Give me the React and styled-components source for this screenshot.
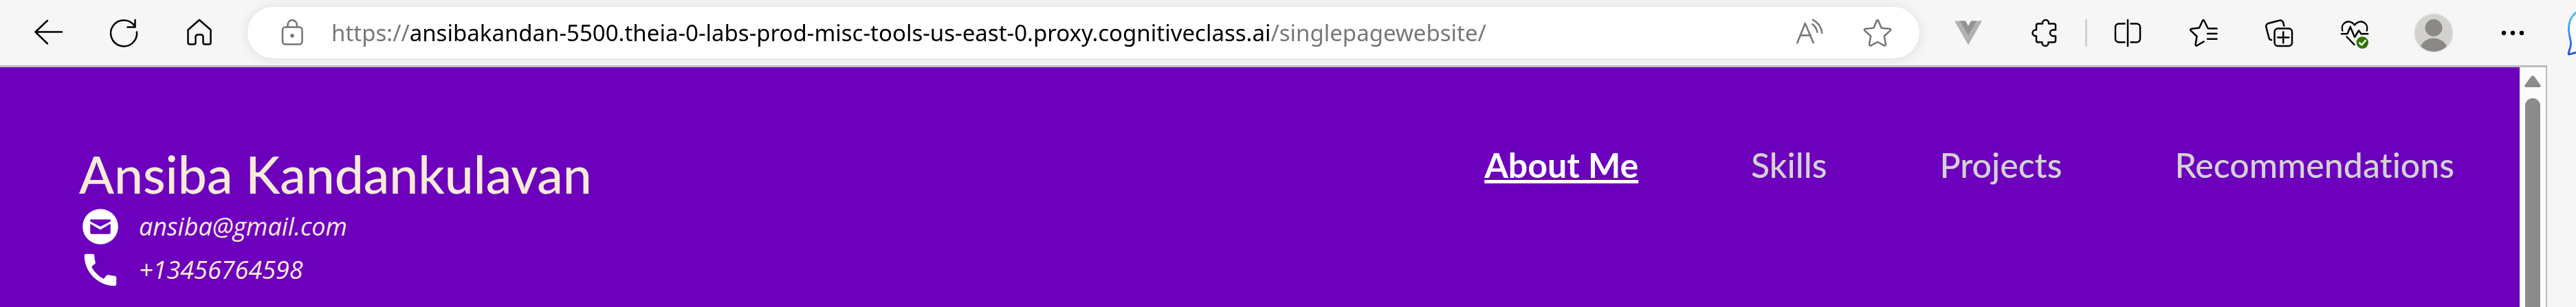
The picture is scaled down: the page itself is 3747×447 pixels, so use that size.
import React, { useLayoutEffect, useState } from 'react';
import styled, { createGlobalStyle } from 'styled-components';

const URL_PARTS = [
  'https://',
  'ansibakandan-5500.theia-0-labs-prod-misc-tools-us-east-0.proxy.cognitiveclass.ai',
  '/singlepagewebsite/',
];
const URL_FONT = '33px "Noto Sans", sans-serif';

const GlobalStyle = createGlobalStyle`
  *, *::before, *::after { box-sizing: border-box; }
  body { margin: 0; background: #f6f6f6; }
`;

const Browser = styled.div`
  display: flex;
  flex-direction: column;
  min-height: 100vh;
  overflow: hidden;
  background: #f6f6f6;
`;

const Toolbar = styled.div`
  display: flex;
  align-items: center;
  height: 95px;
  padding-left: 15px;
`;

const ToolButton = styled.button`
  display: flex;
  flex: none;
  align-items: center;
  justify-content: ${(p) => (p.$end ? 'flex-end' : 'center')};
  width: ${(p) => p.$width || 110}px;
  height: 75px;
  padding: 0;
  border: 0;
  background: none;
  color: ${(p) => (p.$muted ? '#747474' : '#000')};
`;

const Glyph = styled.svg`
  flex: none;
  width: 44px;
  height: 44px;
  overflow: visible;
  fill: none;
  stroke: currentColor;
  stroke-width: 2.5;
  stroke-linecap: round;
  stroke-linejoin: round;
`;

const Picture = styled.svg`
  display: block;
  flex: none;
`;

const AddressBar = styled.form`
  display: flex;
  flex: 1;
  align-items: center;
  min-width: 0;
  height: 75px;
  margin: 0 16px 0 15px;
  padding: 0 12px 0 8px;
  border-radius: 38px;
  background: #fff;
  box-shadow: 0 1px 18px rgba(0, 0, 0, 0.11);
`;

const AddressInput = styled.input`
  flex: 1;
  min-width: 0;
  height: 60px;
  padding: 0;
  border: 0;
  outline: 0;
  font: ${URL_FONT};
  color: #000;
  background-color: #767676;
  background-clip: text;
  -webkit-background-clip: text;
  -webkit-text-fill-color: transparent;
`;

const Divider = styled.div`
  flex: none;
  width: 3px;
  height: 40px;
  margin: 0 4px 0 5px;
  background: #d0d0d0;
`;

const Viewport = styled.div`
  display: flex;
  flex: 1;
  margin-right: 42px;
  border-top: 3px solid #bdbdbd;
  border-right: 2px solid #bdbdbd;
`;

const Header = styled.header`
  display: flex;
  flex: 1;
  align-items: flex-start;
  justify-content: space-between;
  padding: 110px 95px 20px 115px;
  background: #6c00bd;
  font-family: Lato, sans-serif;
  font-weight: 500;
  font-variant-ligatures: none;
`;

const Name = styled.h1`
  margin: 0;
  font-size: 75px;
  font-weight: inherit;
  line-height: 90px;
  color: #faebd7;
`;

const Contact = styled.address`
  display: flex;
  align-items: center;
  gap: 25px;
  height: 63px;
  font: italic 500 36px "Open Sans", sans-serif;
  color: #faebd7;
`;

const ContactLink = styled.a`
  color: inherit;
  text-decoration: none;
`;

const Nav = styled.nav`
  display: flex;
  gap: 164px;
`;

const NavLink = styled.a`
  font-size: 50px;
  line-height: 64px;
  white-space: nowrap;
  font-weight: ${(p) => (p.$active ? 700 : 'inherit')};
  color: ${(p) => (p.$active ? '#fff' : '#d3d3d3')};
  text-decoration: ${(p) => (p.$active ? 'underline 5px' : 'none')};
  text-underline-offset: 3px;
  text-decoration-skip-ink: none;
`;

const Scrollbar = styled.div`
  display: flex;
  flex: none;
  flex-direction: column;
  align-items: center;
  gap: 16px;
  width: 38px;
  padding-top: 12px;
  background: #fcfcfc;
`;

const Thumb = styled.div`
  flex: 1;
  width: 22px;
  border-radius: 11px 11px 0 0;
  background: #8b8b8b;
`;

const Icon = ({ children }) => (
  <Glyph viewBox="0 0 44 44" aria-hidden="true">{children}</Glyph>
);

// Greys the scheme and the path of the address, leaving the host black.
function useAddressColours() {
  const [gradient, setGradient] = useState('none');
  useLayoutEffect(() => {
    const ctx = document.createElement('canvas').getContext('2d');
    const measure = () => {
      ctx.font = URL_FONT;
      const from = ctx.measureText(URL_PARTS[0]).width;
      const to = ctx.measureText(URL_PARTS[0] + URL_PARTS[1]).width;
      setGradient(
        `linear-gradient(to right, #767676 ${from}px, #000 ${from}px ${to}px, #767676 ${to}px)`
      );
    };
    measure();
    document.fonts.ready.then(measure);
  }, []);
  return gradient;
}

function Address() {
  const gradient = useAddressColours();
  return (
    <AddressBar onSubmit={(e) => e.preventDefault()}>
      <ToolButton type="button" $width={114} $muted aria-label="View site information">
        <Icon>
          <rect x="8" y="13.5" width="28.5" height="25" rx="4" />
          <path d="M15.5 13V10a6.7 6.7 0 0 1 13.4 0v3" />
          <circle cx="22" cy="26" r="1.5" fill="currentColor" />
        </Icon>
      </ToolButton>
      <AddressInput
        type="text"
        aria-label="Address and search bar"
        spellCheck={false}
        defaultValue={URL_PARTS.join('')}
        style={{ backgroundImage: gradient }}
      />
      <ToolButton type="button" $width={99} $muted aria-label="Read aloud">
        <Icon>
          <path d="M4.3 36.5 15.7 8 27.7 36.5M8.5 25.5h15.5M26.3 9.2a18 18 0 0 1 7 11.6M27 2.8a25 25 0 0 1 13.3 19.4" />
        </Icon>
      </ToolButton>
      <ToolButton type="button" $width={99} $muted aria-label="Add to favorites">
        <Icon>
          <path d="M20.8 4.2q1.2-1.8 2.4 0L27.7 14.8l12 1.2q2.4.8.8 2.6L31.8 26.5l2.2 12q-.2 2.6-2.4 1.8L22 35l-9.6 5.3q-2.2.8-2.4-1.8l2.2-12L3.5 18.6q-1.6-1.8.8-2.6l12-1.2z" />
        </Icon>
      </ToolButton>
    </AddressBar>
  );
}

export default function App() {
  return (
    <Browser>
      <GlobalStyle />
      <Toolbar>
        <ToolButton aria-label="Back">
          <Icon><path d="M42 20.5H3.500M21 4 3.500 20.500 21 37.500" /></Icon>
        </ToolButton>
        <ToolButton aria-label="Refresh">
          <Icon><path d="M41 20.500A19 19 0 1 1 38 12M38.500 3v10.500H27.500" /></Icon>
        </ToolButton>
        <ToolButton aria-label="Home">
          <Icon>
            <path d="M22 3 38.500 17.500V36a2.500 2.500 0 0 1-2.500 2.500h-6a2.500 2.500 0 0 1-2.500-2.500v-8.500a3 3 0 0 0-3-3h-5a3 3 0 0 0-3 3V36a2.500 2.500 0 0 1-2.500 2.500H8A2.500 2.500 0 0 1 5.500 36V17.500z" />
          </Icon>
        </ToolButton>
        <Address />
        <ToolButton aria-label="Vue devtools">
          <Picture width="44" height="44" viewBox="0 0 44 44" aria-hidden="true">
            <path d="M2 4.500h16l4 7.500 4-7.500h16L22 39.500z" fill="#b1b1b1" />
            <path d="M10 4.500h8l4 7.500 4-7.500h8L22 25z" fill="#929292" />
          </Picture>
        </ToolButton>
        <ToolButton aria-label="Extensions">
          <Icon>
            <path d="M11 11a2.500 2.500 0 0 1 2.500-2.500H20V7.500a4.500 4.500 0 0 1 9 0v1h7.500A2.500 2.500 0 0 1 39 11v6.500h-3.500a4.500 4.500 0 0 0 0 9H39V33a2.500 2.500 0 0 1-2.500 2.500H28.500V36.500a4.500 4.500 0 0 1-9 0v-1h-6A2.500 2.500 0 0 1 11 33v-6.500h-1a4.500 4.500 0 0 1 0-9h1z" />
          </Icon>
        </ToolButton>
        <Divider />
        <ToolButton aria-label="Split screen">
          <Icon>
            <path d="M22 3v38M17.500 8.500H9a5 5 0 0 0-5 5v17a5 5 0 0 0 5 5h8.500M26.500 8.500H35a5 5 0 0 1 5 5v17a5 5 0 0 1-5 5h-8.500" />
          </Icon>
        </ToolButton>
        <ToolButton aria-label="Favorites">
          <Icon>
            <path d="M41.500 15.500H28.700L23.200 4.200q-1.200-1.800-2.400 0L16 14.500 4.500 16q-2.400.8-.8 2.600L12.500 27 10.500 39q.2 2.200 2.400 1.300L22.500 34.500M28 23h13.500M28 30.800h13.500" />
          </Icon>
        </ToolButton>
        <ToolButton aria-label="Collections">
          <Icon>
            <rect x="15.500" y="15.500" width="25.500" height="25.500" rx="5" />
            <path d="M28.200 20.500v16M20.200 28.500h16M29.300 11.500 28.200 7a4.500 4.500 0 0 0-5.500-3.300L6.500 8A4.500 4.500 0 0 0 3.300 13.500L7.500 29.500q1 2.500 3.500 2.700" />
          </Icon>
        </ToolButton>
        <ToolButton aria-label="Browser essentials">
          <Icon>
            <path d="M4.200 18.500C1 7 14.500.5 22 10.500 29.500.5 43 7 39.800 18.500M2.800 23.200h8.700L15.700 13 22 28l6-9.500 3.500 4.700h9.700M10.500 27.500 21.500 39" />
            <circle cx="33.300" cy="36" r="8.700" fill="#2d7600" stroke="none" />
            <path d="m29.300 36.500 3 3 5.500-6.500" stroke="#fff" />
          </Icon>
        </ToolButton>
        <ToolButton $width={120} aria-label="Profile">
          <Picture width="58" height="58" viewBox="0 0 58 58" aria-hidden="true">
            <clipPath id="avatar"><circle cx="29" cy="29" r="27" /></clipPath>
            <circle cx="29" cy="29" r="28.500" fill="#dedddb" />
            <g clipPath="url(#avatar)">
              <circle cx="29" cy="29" r="27" fill="#d2d1cc" />
              <circle cx="29" cy="21.500" r="12.500" fill="#8a8987" />
              <circle cx="29" cy="58" r="21.500" fill="#8a8987" />
            </g>
          </Picture>
        </ToolButton>
        <ToolButton aria-label="Settings and more">
          <Picture width="44" height="44" viewBox="0 0 44 44" aria-hidden="true">
            <circle cx="9" cy="22" r="3.200" />
            <circle cx="22" cy="22" r="3.200" />
            <circle cx="35" cy="22" r="3.200" />
          </Picture>
        </ToolButton>
        <ToolButton $width={37} $end aria-label="Copilot">
          <Picture width="13" height="70" viewBox="0 0 13 70" aria-hidden="true">
            <linearGradient id="copilot" x1="0" y1="0" x2="0" y2="1">
              <stop offset="0" stopColor="#55c8f2" />
              <stop offset="0.500" stopColor="#4196ee" />
              <stop offset="1" stopColor="#2b4fd6" />
            </linearGradient>
            <path d="M17 2C6 9 2 20 2.500 31 3.200 41 6 45 5.500 52 5 58 1 64 2.500 66 7 66 11 63 17 63" fill="#fff" stroke="url(#copilot)" strokeWidth="3" strokeLinejoin="round" />
          </Picture>
        </ToolButton>
      </Toolbar>
      <Viewport>
        <Header>
          <div>
            <Name>Ansiba Kandankulavan</Name>
            <Contact>
              <Picture width="62" height="62" viewBox="0 0 24 24" fill="#fff" aria-hidden="true">
                <path fillRule="evenodd" d="M12 2a10 10 0 1 0 0 20 10 10 0 0 0 0-20zM6.300 7.950H17.700V9.100L12 12 6.300 9.100zM6.300 10.400 12 13.700l5.700-3.300V15.500a.7.7 0 0 1-.7.7H7a.7.7 0 0 1-.7-.7z" />
              </Picture>
              <ContactLink href="mailto:ansiba@gmail.com">ansiba@gmail.com</ContactLink>
            </Contact>
            <Contact>
              <Picture width="62" height="62" viewBox="0 0 24 24" fill="#fff" aria-hidden="true">
                <path d="M20.010 15.380c-1.230 0-2.420-.2-3.530-.56-.35-.12-.74-.03-1.010.24l-1.570 1.970c-2.830-1.350-5.480-3.900-6.890-6.830l1.950-1.660c.27-.28.35-.67.240-1.020-.37-1.110-.56-2.300-.56-3.530 0-.54-.45-.99-.99-.99H4.190C3.650 3 3 3.240 3 3.990 3 13.280 10.730 21 20.010 21c.71 0 .99-.63.990-1.180v-3.450c0-.54-.45-.99-.99-.99z" />
              </Picture>
              <ContactLink href="tel:+13456764598">+13456764598</ContactLink>
            </Contact>
          </div>
          <Nav>
            <NavLink href="#about" $active>About Me</NavLink>
            <NavLink href="#skills">Skills</NavLink>
            <NavLink href="#projects">Projects</NavLink>
            <NavLink href="#recommendations">Recommendations</NavLink>
          </Nav>
        </Header>
        <Scrollbar>
          <Picture width="24" height="17" viewBox="0 0 24 17" aria-hidden="true">
            <path d="M9.500 1.500q2.500-2.500 5 0l9 12.500q.8 3-2 3h-19q-2.800 0-2-3z" fill="#8b8b8b" />
          </Picture>
          <Thumb />
        </Scrollbar>
      </Viewport>
    </Browser>
  );
}
